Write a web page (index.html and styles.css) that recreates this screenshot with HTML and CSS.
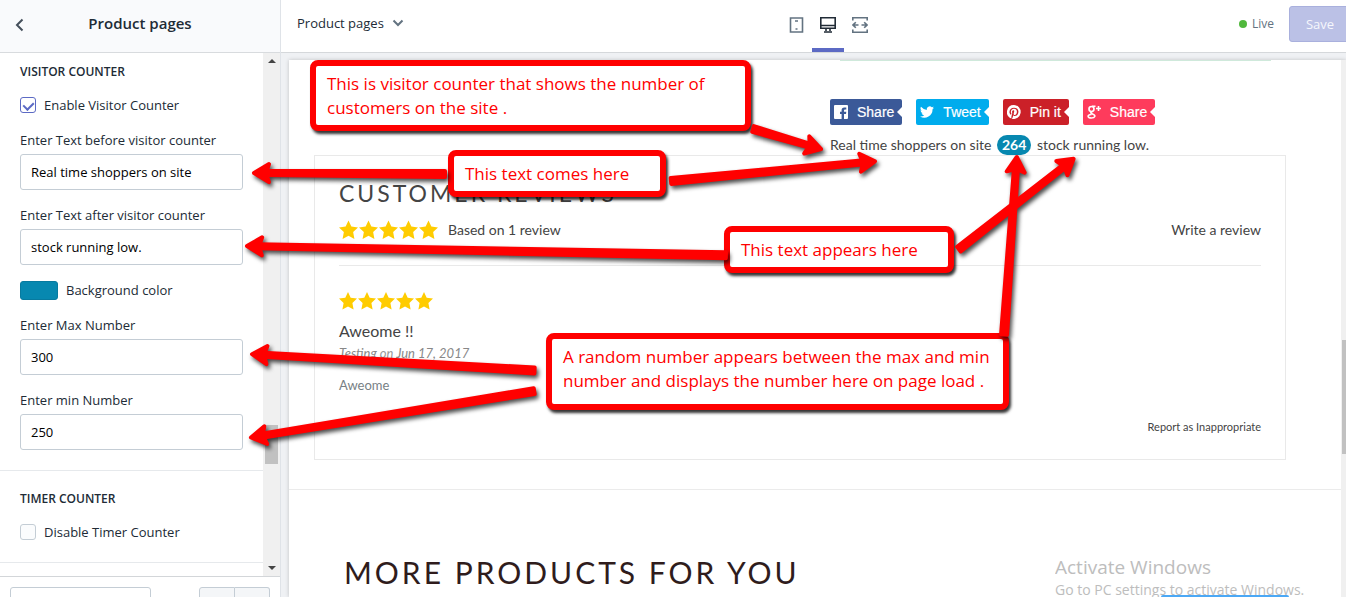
FILE: index.html
```html
<!DOCTYPE html>
<html lang="en">
<head>
    <meta charset="UTF-8">
    <meta name="viewport" content="width=device-width, initial-scale=1.0">
    <title>Product pages</title>
    <link rel="stylesheet" href="styles.css">
</head>
<body>

    <svg class="sprite" aria-hidden="true">
        <symbol id="star" viewBox="0 0 18 18">
            <path d="M9 0l2.700 5.700 6.300.9-4.600 4.400 1.200 6.500L9 14.500l-5.600 3 1.200-6.500L0 6.600l6.300-.9z"/>
        </symbol>
    </svg>

    <div class="app">
        <!-- Settings panel -->
        <aside class="sidebar">
            <header class="sidebar-header">
                <button type="button" class="back" aria-label="Back">
                    <svg width="10" height="14" viewBox="0 0 10 14"><path d="M7.500 1.500L2 7l5.500 5.500"/></svg>
                </button>
                <h1>Product pages</h1>
            </header>

            <div class="sidebar-body">
                <form class="settings">
                    <section class="group">
                        <h2>VISITOR COUNTER</h2>
                        <div class="check-row">
                            <input type="checkbox" id="enableVisitor" checked>
                            <label for="enableVisitor">Enable Visitor Counter</label>
                        </div>
                        <div class="field">
                            <label for="textBefore">Enter Text before visitor counter</label>
                            <input type="text" id="textBefore" value="Real time shoppers on site">
                        </div>
                        <div class="field">
                            <label for="textAfter">Enter Text after visitor counter</label>
                            <input type="text" id="textAfter" value="stock running low.">
                        </div>
                        <div class="color-row">
                            <button type="button" class="swatch" id="bgColor" aria-label="Background color"></button>
                            <label for="bgColor">Background color</label>
                        </div>
                        <div class="field">
                            <label for="maxNumber">Enter Max Number</label>
                            <input type="text" id="maxNumber" value="300">
                        </div>
                        <div class="field">
                            <label for="minNumber">Enter min Number</label>
                            <input type="text" id="minNumber" value="250">
                        </div>
                    </section>

                    <section class="group">
                        <h2>TIMER COUNTER</h2>
                        <div class="check-row">
                            <input type="checkbox" id="disableTimer">
                            <label for="disableTimer">Disable Timer Counter</label>
                        </div>
                    </section>
                </form>
                <div class="scrollbar">
                    <span class="arrow-up"></span>
                    <span class="thumb"></span>
                    <span class="arrow-down"></span>
                </div>
            </div>

            <footer class="sidebar-footer">
                <select aria-label="Theme actions"></select>
                <div class="history">
                    <button type="button" aria-label="Undo"></button>
                    <button type="button" aria-label="Redo"></button>
                </div>
            </footer>
        </aside>

        <main class="main">
            <header class="topbar">
                <button type="button" class="page-picker">
                    Product pages
                    <svg width="12" height="8" viewBox="0 0 12 8"><path d="M1.500 1.500L6 6l4.500-4.500"/></svg>
                </button>
                <nav class="devices">
                    <button type="button" aria-label="Mobile">
                        <svg width="16" height="16" viewBox="0 0 16 16"><path d="M2.500 1h12v14h-12z"/><path d="M7 4h3M7.500 12h2"/></svg>
                    </button>
                    <button type="button" class="active" aria-label="Desktop">
                        <svg width="16" height="16" viewBox="0 0 16 16"><path d="M.8.800h14.400v10.400H.8zM1 8.500h14M6 12v2M10 12v2M4 15h8"/></svg>
                    </button>
                    <button type="button" aria-label="Full width">
                        <svg width="16" height="16" viewBox="0 0 16 16"><path d="M.8 3.500V.8h14.400v2.700M.8 12.500v2.700h14.400v-2.700M1 8h5.500M9.500 8H15M3.800 5.200L1 8l2.800 2.800M12.200 5.200L15 8l-2.800 2.800"/></svg>
                    </button>
                </nav>
                <div class="actions">
                    <span class="live">Live</span>
                    <button type="button" class="save">Save</button>
                </div>
            </header>

            <!-- Store preview -->
            <div class="preview">
                <div class="store">
                    <div class="product-info">
                        <div class="alert-edge"></div>
                        <div class="share">
                            <a href="#" class="facebook">
                                <svg width="14" height="14" viewBox="0 0 14 14"><path fill-rule="evenodd" d="M1 0h12q1 0 1 1v12q0 1-1 1h-3V9h2l.3-2.200H10V5.500q0-1 1-1h1.300v-2h-2Q7.600 2.500 7.600 5.200v1.600H6V9h1.600v5H1q-1 0-1-1V1q0-1 1-1z"/></svg>
                                Share
                            </a>
                            <a href="#" class="twitter">
                                <svg width="14" height="14" viewBox="0 0 24 24"><path d="M24 4.600a10 10 0 0 1-2.800.8 5 5 0 0 0 2.100-2.700 10 10 0 0 1-3.100 1.200 4.900 4.900 0 0 0-8.400 4.500A14 14 0 0 1 1.700 3.200a4.900 4.900 0 0 0 1.500 6.500 5 5 0 0 1-2.200-.6 4.900 4.900 0 0 0 3.900 4.900 5 5 0 0 1-2.200.1 4.900 4.900 0 0 0 4.600 3.400A10 10 0 0 1 0 19.500a14 14 0 0 0 21.500-12.400A10 10 0 0 0 24 4.600z"/></svg>
                                Tweet
                            </a>
                            <a href="#" class="pinterest">
                                <svg width="14" height="14" viewBox="0 0 24 24"><path d="M12 0a12 12 0 0 0-4.400 23.200c-.1-1-.2-2.400 0-3.500l1.500-6s-.4-.7-.4-1.700c0-1.700 1-2.900 2.200-2.900 1 0 1.500.8 1.500 1.700 0 1-.7 2.600-1 4-.3 1.200.6 2.200 1.800 2.200 2.100 0 3.800-2.200 3.800-5.500 0-2.900-2.100-4.900-5-4.900-3.400 0-5.400 2.600-5.400 5.200 0 1 .4 2.100.9 2.700v.4l-.4 1.400-.4.200c-1.500-.7-2.500-2.900-2.500-4.700 0-3.800 2.800-7.300 8-7.300 4.200 0 7.400 3 7.400 7 0 4.100-2.600 7.500-6.200 7.500-1.200 0-2.400-.6-2.800-1.400l-.7 2.900c-.3 1-1 2.300-1.500 3.100A12 12 0 1 0 12 0z"/></svg>
                                Pin it
                            </a>
                            <a href="#" class="google">
                                <svg width="14" height="14" viewBox="0 0 14 14" class="gplus"><circle cx="4.500" cy="4" r="2.500"/><path d="M5 1.200h3.500M5.500 6.500c-3 1-1.500 2 0 2.500 4 1.500 2.500 4-1.200 4C0 13 0 9.800 4.500 9.500M9 3.500h5M11.500 1v5"/></svg>
                                Share
                            </a>
                        </div>
                        <p class="visitors">Real time shoppers on site <span class="count">264</span> stock running low.</p>
                    </div>

                    <section class="reviews">
                        <h3>CUSTOMER REVIEWS</h3>
                        <div class="summary">
                            <span class="stars">
                                <svg><use href="#star"/></svg><svg><use href="#star"/></svg><svg><use href="#star"/></svg><svg><use href="#star"/></svg><svg><use href="#star"/></svg>
                            </span>
                            <span>Based on 1 review</span>
                            <a href="#" class="write">Write a review</a>
                        </div>
                        <article class="review">
                            <span class="stars small">
                                <svg><use href="#star"/></svg><svg><use href="#star"/></svg><svg><use href="#star"/></svg><svg><use href="#star"/></svg><svg><use href="#star"/></svg>
                            </span>
                            <h4>Aweome !!</h4>
                            <p class="byline"><b>Testing</b> on <b>Jun 17, 2017</b></p>
                            <p class="review-text">Aweome</p>
                            <a href="#" class="report">Report as Inappropriate</a>
                        </article>
                    </section>

                    <section class="more">
                        <h2>MORE PRODUCTS FOR YOU</h2>
                    </section>
                </div>
                <div class="preview-scroll"><span class="thumb"></span></div>
            </div>
        </main>
    </div>

    <!-- System watermark and the chat tab over it -->
    <div class="watermark">
        <p class="watermark-title">Activate Windows</p>
        <p>Go to PC settings to activate Windows.</p>
    </div>
    <div class="chat-tab"></div>

    <!-- Notes -->
    <div class="notes">
        <p class="note note-counter">This is visitor counter that shows the number of<br>customers on the site .</p>
        <p class="note note-before">This text comes here</p>
        <p class="note note-after">This text appears here</p>
        <p class="note note-random">A random number appears between the max and min<br>number and displays the number here on page load .</p>

        <svg class="arrows" width="1346" height="597" viewBox="0 0 1346 597" aria-hidden="true">
            <defs>
                <path id="head" d="M-3 0L-18-9l3 9-3 9z"/>
            </defs>
            <g transform="translate(824 150) rotate(16.500)"><path d="M-74-3L-14-2v4L-74 3z"/><use href="#head"/></g>
            <g transform="translate(878 161) rotate(-5.500)"><path d="M-208-3L-14-2v4L-208 3z"/><use href="#head"/></g>
            <g transform="translate(251 173) rotate(180.300)"><path d="M-194-3L-14-2v4L-194 3z"/><use href="#head"/></g>
            <g transform="translate(244 246) rotate(181.100)"><path d="M-482-3L-14-2v4L-482 3z"/><use href="#head"/></g>
            <g transform="translate(1076 157) rotate(-38.200)"><path d="M-149-3L-14-2v4L-149 3z"/><use href="#head"/></g>
            <g transform="translate(1017 154) rotate(-85.900)"><path d="M-181-3L-14-2v4L-181 3z"/><use href="#head"/></g>
            <g transform="translate(249 354) rotate(183.300)"><path d="M-286-3L-14-2v4L-286 3z"/><use href="#head"/></g>
            <g transform="translate(248 438) rotate(170.700)"><path d="M-290-3L-14-2v4L-290 3z"/><use href="#head"/></g>
        </svg>
    </div>

</body>
</html>
```
FILE: styles.css
```css
* {
    box-sizing: border-box;
}

body {
    margin: 0;
    font-family: "Open Sans", "Noto Sans", sans-serif;
    font-size: 13px;
    line-height: 20px;
    color: #212b36;
    overflow: hidden;
}

h1, h2, h3, h4, p {
    margin: 0;
    font-weight: 400;
}

button, input, select {
    font: inherit;
    color: inherit;
}

button {
    padding: 0;
    border: none;
    background: none;
    cursor: pointer;
}

a {
    color: inherit;
    text-decoration: none;
}

.sprite {
    display: none;
}

.app {
    display: flex;
    height: 100vh;
}

/* Sidebar */
.sidebar {
    display: flex;
    flex-direction: column;
    width: 281px;
    flex-shrink: 0;
    border-right: 1px solid #dfe3e8;
}

.sidebar-header {
    display: flex;
    align-items: center;
    height: 53px;
    flex-shrink: 0;
    padding: 0 15px 6px;
    background: #f9fafc;
    border-bottom: 1px solid #d8dbde;
}

.sidebar-header h1 {
    flex: 1;
    padding-right: 10px;
    text-align: center;
    font-size: 15px;
    font-weight: 600;
}

.back svg {
    display: block;
    margin-top: 4px;
    fill: none;
    stroke: #454f5b;
    stroke-width: 2;
}

.sidebar-body {
    display: flex;
    flex: 1;
    min-height: 0;
}

.settings {
    flex: 1;
    overflow: hidden;
}

.group {
    padding: 18px 20px 20px;
    border-bottom: 1px solid #e6e9ec;
}

.group:first-child {
    padding-top: 9px;
}

.group h2 {
    margin-bottom: 13px;
    font-size: 12px;
    font-weight: 600;
}

.check-row {
    display: flex;
    align-items: center;
    gap: 8px;
}

.check-row input {
    appearance: none;
    display: flex;
    justify-content: center;
    width: 16px;
    height: 16px;
    margin: 0;
    border: 1px solid #c4cdd5;
    border-radius: 3px;
    background: #fbfcfd;
}

.check-row input:checked {
    border-color: #5c6ac4;
    background: #fff;
}

.check-row input:checked::after {
    content: "";
    width: 5px;
    height: 8px;
    margin-top: 2px;
    border: solid #5c6ac4;
    border-width: 0 2px 2px 0;
    transform: rotate(45deg);
}

.field {
    display: flex;
    flex-direction: column;
    gap: 4px;
    margin-top: 15px;
}

.field input {
    width: 100%;
    height: 36px;
    padding: 0 10px;
    border: 1px solid #c4cdd5;
    border-radius: 3px;
    background: #fff;
    color: #000;
}

.color-row {
    display: flex;
    align-items: center;
    gap: 8px;
    margin-top: 15px;
}

.swatch {
    width: 38px;
    height: 19px;
    border: 1px solid #077a9f;
    border-radius: 3px;
    background: #0788b0;
}

.scrollbar {
    display: flex;
    flex-direction: column;
    align-items: center;
    width: 17px;
    padding: 6px 0;
    background: #f0f0f0;
}

.arrow-up, .arrow-down {
    border: 4px solid transparent;
}

.arrow-up {
    border-top: none;
    border-bottom-color: #444;
}

.arrow-down {
    margin-top: auto;
    border-bottom: none;
    border-top-color: #444;
}

.scrollbar .thumb {
    width: 13px;
    height: 39px;
    margin-top: 362px;
    background: #c1c1c1;
}

.sidebar-footer {
    display: flex;
    justify-content: space-between;
    height: 21px;
    flex-shrink: 0;
    padding: 10px 10px 0;
    border-top: 1px solid #d3d6d9;
    overflow: hidden;
}

.sidebar-footer select {
    appearance: none;
    width: 141px;
    height: 36px;
    border: 1px solid #c4cdd5;
    border-radius: 3px;
    background: #fff;
}

.history {
    display: flex;
}

.history button {
    width: 36px;
    height: 36px;
    border: 1px solid #c4cdd5;
    border-radius: 3px 0 0 3px;
    background: #f4f6f8;
}

.history button + button {
    width: 35px;
    border-left: none;
    border-radius: 0 3px 3px 0;
}

/* Top bar */
.main {
    display: flex;
    flex: 1;
    flex-direction: column;
    min-width: 0;
    background: #eff1f4;
}

.topbar {
    display: grid;
    grid-template-columns: 1fr auto 1fr;
    height: 53px;
    flex-shrink: 0;
    margin-right: -13px; /* Save runs past the window edge */
    padding-left: 16px;
    background: #fff;
    border-bottom: 1px solid #d5d8db;
}

.page-picker {
    display: flex;
    align-items: center;
    justify-self: start;
    gap: 8px;
    padding-bottom: 6px;
}

.page-picker svg {
    fill: none;
    stroke: #637381;
    stroke-width: 2;
}

.devices {
    display: flex;
}

.devices button {
    display: flex;
    align-items: center;
    justify-content: center;
    width: 32px;
    border-bottom: 4px solid transparent;
}

.devices svg {
    margin-top: 2px;
    fill: none;
    stroke: #637381;
    stroke-width: 1.6;
}

.devices .active {
    border-bottom-color: #5c6ac4;
}

.devices .active svg {
    stroke: #212b36;
}

.actions {
    display: flex;
    align-items: center;
    justify-content: flex-end;
    gap: 15px;
    padding: 0 8px 4px 0;
}

.live {
    display: flex;
    align-items: center;
    gap: 5px;
    font-size: 12px;
    color: #637381;
}

.live::before {
    content: "";
    width: 8px;
    height: 8px;
    border-radius: 50%;
    background: #50b83c;
}

.save {
    width: 62px;
    height: 36px;
    border: 1px solid #a9b0dd;
    border-radius: 3px;
    background: #bbc1e6;
    color: #f6f7fc;
}

/* Preview */
.preview {
    display: flex;
    flex: 1;
    min-height: 0;
    margin: 7px 0 0 8px;
    background: #fff;
    box-shadow: 0 0 4px rgba(0, 0, 0, 0.2);
}

.store {
    flex: 1;
    overflow: hidden;
    font-family: Lato, sans-serif;
    font-size: 14px;
    color: #444;
}

.preview-scroll {
    width: 5px;
    padding: 280px 0 0 1px;
    background: #f0f0f0;
}

.preview-scroll .thumb {
    display: block;
    height: 114px;
    background: #c1c1c1;
}

.product-info {
    margin-left: 541px;
}

.alert-edge {
    height: 1px;
    margin: 0 70px 38px 10px;
    background: #cfe9db;
}

.share {
    display: flex;
    gap: 14px;
    margin-bottom: 10px;
}

.share a {
    display: flex;
    align-items: center;
    gap: 9px;
    height: 26px;
    padding-left: 4px;
    border-radius: 2px;
    font-family: "Liberation Sans", Arial, sans-serif;
    color: #fff;
    -webkit-text-stroke: 0.2px #fff;
}

.share svg {
    fill: #fff;
}

.share .gplus {
    fill: none;
    stroke: #fff;
    stroke-width: 1.6;
}

/* Notch on the right edge */
.share a::after {
    content: "";
    margin-left: -6px;
    border: 5px solid transparent;
    border-left: none;
    border-right-color: #fff;
}

.facebook {
    background: #3b5998;
}

.twitter {
    background: #00aced;
}

.pinterest {
    background: #cb2028;
}

.google {
    background: #fe3b5c;
}

.count {
    display: inline-block;
    margin: 0 2px;
    padding: 0 5px;
    border-radius: 10px;
    background: #0788b0;
    color: #fff;
    font-weight: 700;
}

.reviews {
    margin: 0 55px 0 25px;
    padding: 22px 24px;
    border: 1px solid #e9e9e9;
}

.reviews h3 {
    margin-bottom: 12px;
    font-size: 23px;
    line-height: 30px;
    letter-spacing: 3px;
}

.summary {
    display: flex;
    align-items: center;
    gap: 10px;
    padding-bottom: 25px;
    border-bottom: 1px solid #e9e9e9;
}

.write {
    margin-left: auto;
}

.stars {
    display: flex;
    gap: 1px;
}

.stars svg {
    width: 19px;
    height: 20px;
    fill: #fc0;
}

.stars.small svg {
    width: 18px;
}

.review {
    display: flex;
    flex-direction: column;
    padding-top: 25px;
}

.review h4 {
    margin: 10px 0 2px;
    font-size: 16px;
}

.byline {
    margin-bottom: 12px;
    font-size: 13px;
    font-style: italic;
    color: #999;
}

.byline b {
    font-weight: 400;
    color: #888;
}

.review-text {
    margin-bottom: 22px;
    font-size: 13px;
    color: #777f85;
}

.report {
    align-self: flex-end;
    font-size: 11px;
}

.more {
    margin-top: 29px;
    padding: 62px 55px 0;
    border-top: 1px solid #ebebeb;
}

.more h2 {
    font-size: 30px;
    line-height: 40px;
    letter-spacing: 3px;
    color: #2f1c1c;
    white-space: nowrap;
}

/* Watermark */
.watermark {
    position: absolute;
    top: 555px;
    left: 1055px;
    height: 42px;
    overflow: hidden;
    color: #bdbdbd;
    font-size: 14px;
    line-height: 22px;
    white-space: nowrap;
}

.watermark-title {
    font-size: 19px;
    line-height: 24px;
}

.chat-tab {
    position: absolute;
    top: 595px;
    left: 1161px;
    width: 128px;
    height: 2px;
    border-radius: 2px 2px 0 0;
    background: #4ba8f5;
}

/* Notes over the page */
.note {
    position: absolute;
    padding: 6px 11px 5px;
    border: 6px solid #f00;
    border-radius: 8px;
    background: #fff;
    box-shadow: 2px 3px 3px rgba(0, 0, 0, 0.8);
    color: #f00;
    font-size: 17px;
    line-height: 24px;
    white-space: nowrap;
}

.note-counter {
    top: 60px;
    left: 310px;
    width: 441px;
}

.note-before {
    top: 150px;
    left: 448px;
    width: 218px;
}

.note-after {
    top: 226px;
    left: 724px;
    width: 230px;
}

.note-random {
    top: 333px;
    left: 546px;
    width: 463px;
    padding-bottom: 11px;
}

.arrows {
    position: absolute;
    top: 0;
    left: 0;
    pointer-events: none;
    fill: #f00;
    stroke: #f00;
    stroke-width: 4;
    stroke-linejoin: round;
    filter: drop-shadow(2px 3px 2px rgba(0, 0, 0, 0.7));
}
```
